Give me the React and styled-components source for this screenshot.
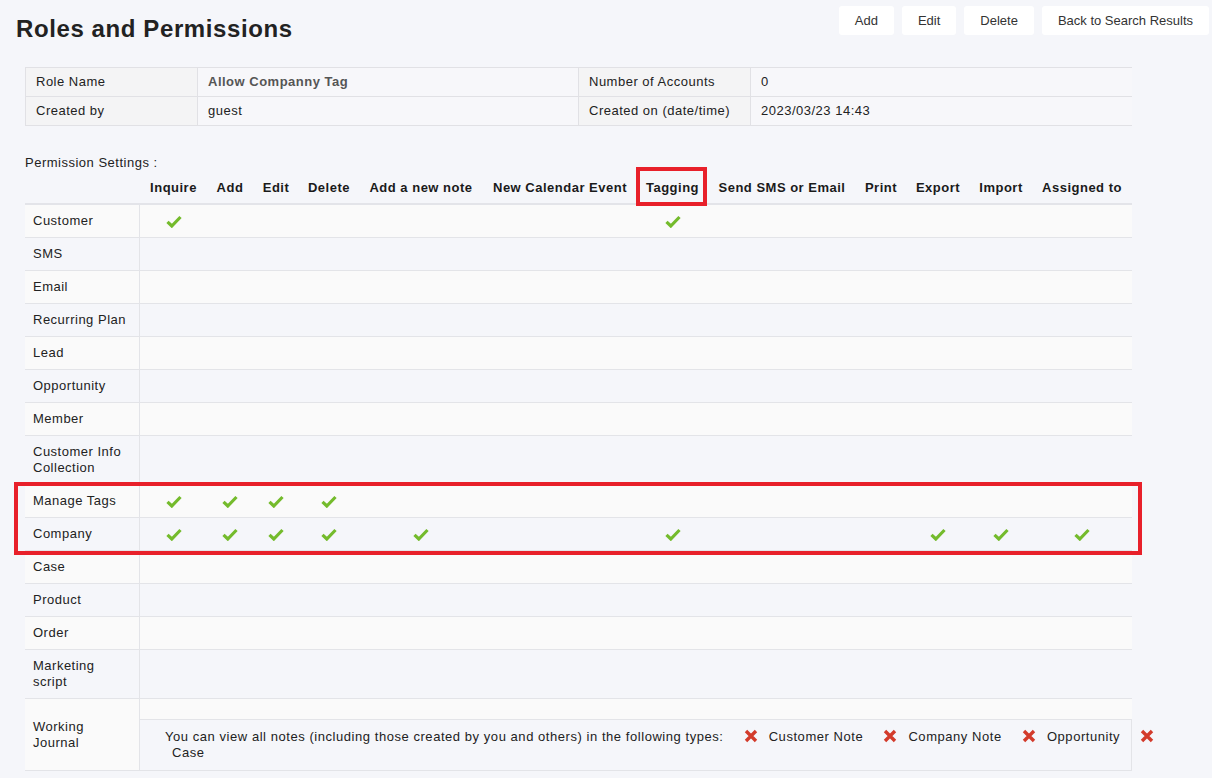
import React from "react";
import styled, { createGlobalStyle } from "styled-components";

const GlobalStyle = createGlobalStyle`
  html, body {
    margin: 0;
    padding: 0;
    background: #f5f6fa;
  }
  body {
    font-family: "Liberation Sans", Arial, sans-serif;
    color: #222;
  }
`;

const columns = [
  { label: "Inquire", w: 67 },
  { label: "Add", w: 46 },
  { label: "Edit", w: 46 },
  { label: "Delete", w: 60 },
  { label: "Add a new note", w: 124 },
  { label: "New Calendar Event", w: 154 },
  { label: "Tagging", w: 71, marked: true },
  { label: "Send SMS or Email", w: 148 },
  { label: "Print", w: 50 },
  { label: "Export", w: 64 },
  { label: "Import", w: 62 },
  { label: "Assigned to", w: 100 },
];

const gridCols = `115px ${columns.map((c) => c.w + "px").join(" ")}`;

const rowsBefore = [
  { name: "Customer", checks: [0, 6] },
  { name: "SMS" },
  { name: "Email" },
  { name: "Recurring Plan" },
  { name: "Lead" },
  { name: "Opportunity" },
  { name: "Member" },
  { name: "Customer Info Collection" },
];

const rowsMarked = [
  { name: "Manage Tags", checks: [0, 1, 2, 3] },
  { name: "Company", checks: [0, 1, 2, 3, 4, 6, 9, 10, 11] },
];

const rowsAfter = [
  { name: "Case" },
  { name: "Product" },
  { name: "Order" },
  { name: "Marketing script" },
];

const noteTypes = ["Customer Note", "Company Note", "Opportunity", "Case"];

const Page = styled.div`
  width: 1212px;
  min-height: 778px;
`;

const Header = styled.header`
  display: flex;
  justify-content: space-between;
  align-items: flex-start;
  padding: 6px 3px 0 16px;
`;

const Title = styled.h1`
  margin: 10px 0 0;
  font-size: 24px;
  line-height: 26px;
  font-weight: 700;
  letter-spacing: 0.6px;
  color: #222;
`;

const Actions = styled.div`
  display: flex;
  gap: 8px;
`;

const ActionButton = styled.button`
  height: 29px;
  padding: 0 16px;
  background: #fff;
  border: none;
  border-radius: 3px;
  font-family: "Liberation Sans", Arial, sans-serif;
  font-size: 13px;
  color: #333;
  cursor: pointer;
`;

const Content = styled.main`
  margin: 25px 0 0 25px;
  width: 1107px;
`;

const InfoTable = styled.div`
  display: grid;
  grid-template-columns: 172px 381px 172px 381px;
  border: 1px solid #e1e1e5;
  border-bottom: none;
`;

const InfoCell = styled.div`
  height: 28px;
  line-height: 28px;
  padding: 0 10px;
  font-size: 13px;
  letter-spacing: 0.5px;
  border-bottom: 1px solid #e1e1e5;
  border-right: ${(p) => (p.$last ? "none" : "1px solid #e1e1e5")};
  background: ${(p) => (p.$label ? "#f4f4f5" : "#f7f7fa")};
  color: ${(p) => (p.$strong ? "#555" : "#222")};
  font-weight: ${(p) => (p.$strong ? 700 : 400)};
`;

const SectionLabel = styled.div`
  margin-top: 29px;
  font-size: 13px;
  line-height: 16px;
  letter-spacing: 0.5px;
`;

const HeadRow = styled.div`
  display: grid;
  grid-template-columns: ${gridCols};
  height: 32px;
  border-bottom: 2px solid #e3e4e9;
`;

const HeadCell = styled.div`
  position: relative;
  display: flex;
  align-items: center;
  justify-content: center;
  white-space: nowrap;
  font-size: 13px;
  font-weight: 700;
  letter-spacing: 0.5px;
  color: #1a1a1a;

  ${(p) =>
    p.$marked &&
    `
    &::after {
      content: "";
      position: absolute;
      top: -4px;
      bottom: -3px;
      left: -1px;
      right: 1px;
      border: 4px solid #e8202a;
      pointer-events: none;
    }
  `}
`;

const Row = styled.div`
  display: grid;
  grid-template-columns: ${gridCols};
  border-bottom: 1px solid #e3e4e8;
  background: ${(p) => (p.$light ? "#fafafa" : "transparent")};
`;

const NameCell = styled.div`
  display: flex;
  align-items: center;
  padding: 8px 8px;
  font-size: 13px;
  line-height: 16px;
  letter-spacing: 0.5px;
  color: #222;
  border-right: 1px solid #e3e4e8;
`;

const CheckCell = styled.div`
  display: flex;
  align-items: center;
  justify-content: center;
`;

const MarkedGroup = styled.div`
  position: relative;

  &::after {
    content: "";
    position: absolute;
    top: -3px;
    bottom: -4px;
    left: -11px;
    right: -10px;
    border: 4px solid #e8202a;
    pointer-events: none;
  }
`;

const JournalCell = styled.div`
  grid-column: 2 / -1;
  padding-top: 20px;
`;

const NoteBox = styled.div`
  border-top: 1px solid #e3e4e8;
  border-right: 1px solid #e3e4e8;
  background: #f5f6fa;
  padding: 9px 0 9px 25px;
`;

const NoteText = styled.div`
  width: 1010px;
  font-size: 13px;
  line-height: 16px;
  letter-spacing: 0.55px;
  color: #222;
`;

const NoteType = styled.span`
  margin-left: ${(p) => (p.$gap ? "7px" : "0")};
  margin-right: 20px;
`;

const Cross = styled.svg`
  display: inline-block;
  vertical-align: -2px;
`;

function Check() {
  return (
    <svg width="16" height="13" viewBox="0 0 16 13">
      <path d="M1.5 6.8 L5.8 11 L14.5 2" fill="none" stroke="#74bb2c" strokeWidth="3.2" />
    </svg>
  );
}

function CrossIcon() {
  return (
    <Cross width="14" height="14" viewBox="0 0 14 14">
      <path d="M2 2 L12 12 M12 2 L2 12" stroke="#d33b2b" strokeWidth="3.4" />
    </Cross>
  );
}

function PermRow({ row, light }) {
  const checks = row.checks || [];
  return (
    <Row $light={light}>
      <NameCell>{row.name}</NameCell>
      {columns.map((c, i) => (
        <CheckCell key={c.label}>{checks.includes(i) && <Check />}</CheckCell>
      ))}
    </Row>
  );
}

export default function App() {
  return (
    <Page>
      <GlobalStyle />
      <Header>
        <Title>Roles and Permissions</Title>
        <Actions>
          <ActionButton>Add</ActionButton>
          <ActionButton>Edit</ActionButton>
          <ActionButton>Delete</ActionButton>
          <ActionButton>Back to Search Results</ActionButton>
        </Actions>
      </Header>

      <Content>
        <InfoTable>
          <InfoCell $label>Role Name</InfoCell>
          <InfoCell $strong>Allow Companny Tag</InfoCell>
          <InfoCell $label>Number of Accounts</InfoCell>
          <InfoCell $last>0</InfoCell>
          <InfoCell $label>Created by</InfoCell>
          <InfoCell>guest</InfoCell>
          <InfoCell $label>Created on (date/time)</InfoCell>
          <InfoCell $last>2023/03/23 14:43</InfoCell>
        </InfoTable>

        <SectionLabel>Permission Settings :</SectionLabel>

        <HeadRow>
          <div />
          {columns.map((c) => (
            <HeadCell key={c.label} $marked={c.marked}>
              {c.label}
            </HeadCell>
          ))}
        </HeadRow>

        {rowsBefore.map((r, i) => (
          <PermRow key={r.name} row={r} light={i % 2 === 0} />
        ))}
        <MarkedGroup>
          {rowsMarked.map((r, i) => (
            <PermRow key={r.name} row={r} light={i % 2 === 0} />
          ))}
        </MarkedGroup>
        {rowsAfter.map((r, i) => (
          <PermRow key={r.name} row={r} light={i % 2 === 0} />
        ))}

        <Row $light>
          <NameCell>Working Journal</NameCell>
          <JournalCell>
            <NoteBox>
              <NoteText>
                <NoteType>
                  You can view all notes (including those created by you and others) in the
                  following types:
                </NoteType>
                {noteTypes.map((t) => (
                  <React.Fragment key={t}>
                    <CrossIcon />{" "}
                    <NoteType $gap>{t}</NoteType>
                  </React.Fragment>
                ))}
              </NoteText>
            </NoteBox>
          </JournalCell>
        </Row>
      </Content>
    </Page>
  );
}
